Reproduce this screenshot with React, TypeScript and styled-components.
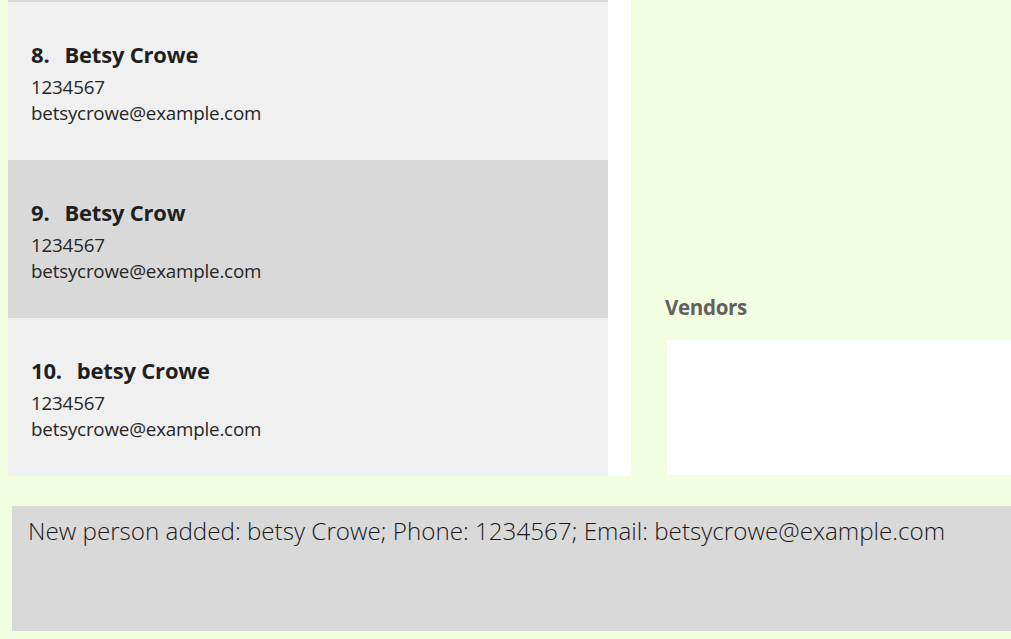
import styled, { createGlobalStyle } from "styled-components";

const GlobalStyle = createGlobalStyle`
  html, body {
    margin: 0;
    padding: 0;
    background: #f3fde0;
    font-family: "Open Sans", "Noto Sans", sans-serif;
  }
`;

type Person = { index: number; name: string; phone: string; email: string };

const people: Person[] = [
  { index: 8, name: "Betsy Crowe", phone: "1234567", email: "betsycrowe@example.com" },
  { index: 9, name: "Betsy Crow", phone: "1234567", email: "betsycrowe@example.com" },
  { index: 10, name: "betsy Crowe", phone: "1234567", email: "betsycrowe@example.com" },
];

const App = () => {
  return (
    <Page>
      <GlobalStyle />
      <TopRow>
        <ListPane>
          <ListView>
            {people.map((p) => (
              <Card key={p.index} $odd={p.index % 2 === 1}>
                <Name>
                  <Index>{p.index}.</Index>
                  {p.name}
                </Name>
                <Detail>{p.phone}</Detail>
                <Detail>{p.email}</Detail>
              </Card>
            ))}
          </ListView>
        </ListPane>
        <VendorPane>
          <SectionTitle>Vendors</SectionTitle>
          <VendorBox />
        </VendorPane>
      </TopRow>
      <ResultArea>
        <ResultBox>
          New person added: betsy Crowe; Phone: 1234567; Email: betsycrowe@example.com
        </ResultBox>
      </ResultArea>
    </Page>
  );
};

const Page = styled.div`
  display: flex;
  flex-direction: column;
  width: 1011px;
  height: 639px;
  overflow: hidden;
`;

const TopRow = styled.div`
  display: flex;
  height: 476px;
`;

const ListPane = styled.div`
  margin-left: 8px;
  width: 623px;
  background: #ffffff;
`;

const ListView = styled.div`
  width: 600px;
  border-top: 2px solid #d8d8d8;
`;

const Card = styled.div<{ $odd: boolean }>`
  box-sizing: border-box;
  height: 158px;
  padding: 38px 0 0 23px;
  background: ${(p) => (p.$odd ? "#d9d9d9" : "#f0f0f0")};
  color: #1f1f1f;
`;

const Name = styled.div`
  font-size: 22px;
  font-weight: 700;
  line-height: 29px;
  letter-spacing: -0.2px;
  margin-bottom: 5px;
`;

const Index = styled.span`
  margin-right: 15px;
`;

const Detail = styled.div`
  font-size: 18.8px;
  line-height: 26px;
  letter-spacing: -0.2px;
  color: #262626;
`;

const VendorPane = styled.div`
  flex: 1;
  display: flex;
  flex-direction: column;
  justify-content: flex-end;
  padding-left: 34px;
  padding-bottom: 1px;
`;

const SectionTitle = styled.div`
  font-size: 20.5px;
  font-weight: 700;
  line-height: 28px;
  letter-spacing: -0.3px;
  color: #606060;
  margin-bottom: 19px;
`;

const VendorBox = styled.div`
  margin-left: 2px;
  height: 135px;
  background: #ffffff;
`;

const ResultArea = styled.div`
  padding: 30px 0 0 12px;
`;

const ResultBox = styled.div`
  box-sizing: border-box;
  height: 125px;
  padding: 8px 16px;
  background: #d9d9d9;
  font-size: 24.2px;
  font-weight: 300;
  line-height: 33px;
  color: #1a1a1a;
`;

export default App;
